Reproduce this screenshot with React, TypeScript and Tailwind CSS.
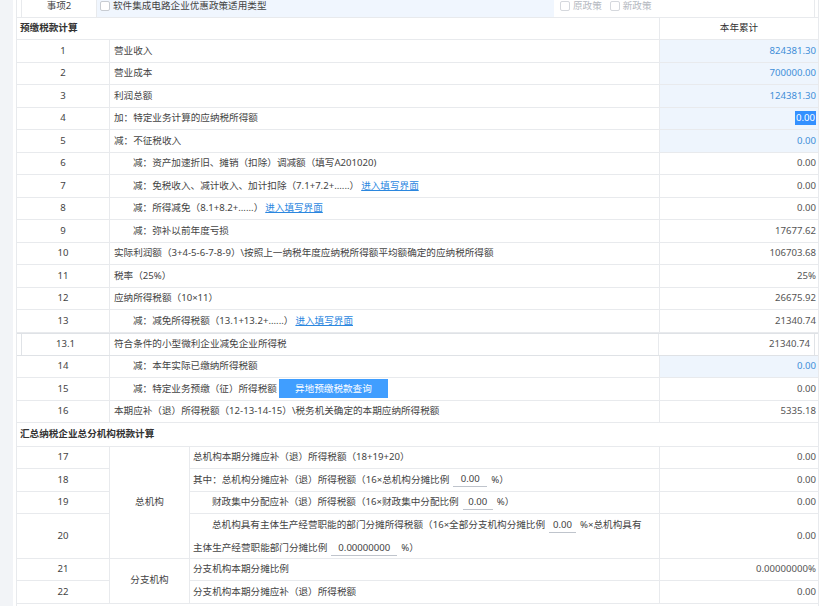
import React from 'react'

type Row = {
  no: string
  label: React.ReactNode
  value: string
  indent?: boolean
  blue?: boolean
  selected?: boolean
}

const Link = ({ children }: { children: React.ReactNode }) => (
  <span className="ml-[2px] cursor-pointer text-[#2b87df] underline">{children}</span>
)

const Underline = ({ value, w }: { value: string; w: string }) => (
  <span className={`mx-[4px] inline-block border-b border-[#bfc4cc] text-center leading-[14px] ${w}`}>{value}</span>
)

const rows: Row[] = [
  { no: '1', label: '营业收入', value: '824381.30', blue: true },
  { no: '2', label: '营业成本', value: '700000.00', blue: true },
  { no: '3', label: '利润总额', value: '124381.30', blue: true },
  { no: '4', label: '加：特定业务计算的应纳税所得额', value: '0.00', blue: true, selected: true },
  { no: '5', label: '减：不征税收入', value: '0.00', blue: true },
  { no: '6', label: '减：资产加速折旧、摊销（扣除）调减额（填写A201020)', value: '0.00', indent: true },
  {
    no: '7',
    label: (
      <>
        减：免税收入、减计收入、加计扣除（7.1+7.2+......）<Link>进入填写界面</Link>
      </>
    ),
    value: '0.00',
    indent: true,
  },
  {
    no: '8',
    label: (
      <>
        减：所得减免（8.1+8.2+......）<Link>进入填写界面</Link>
      </>
    ),
    value: '0.00',
    indent: true,
  },
  { no: '9', label: '减：弥补以前年度亏损', value: '17677.62', indent: true },
  {
    no: '10',
    label: '实际利润额（3+4-5-6-7-8-9）\\按照上一纳税年度应纳税所得额平均额确定的应纳税所得额',
    value: '106703.68',
  },
  { no: '11', label: '税率（25%）', value: '25%' },
  { no: '12', label: '应纳所得税额（10×11）', value: '26675.92' },
  {
    no: '13',
    label: (
      <>
        减：减免所得税额（13.1+13.2+......）<Link>进入填写界面</Link>
      </>
    ),
    value: '21340.74',
    indent: true,
  },
]

const rowsAfter: Row[] = [
  { no: '14', label: '减：本年实际已缴纳所得税额', value: '0.00', indent: true, blue: true },
  {
    no: '15',
    label: (
      <>
        减：特定业务预缴（征）所得税额
        <button className="ml-[2px] h-[19px] w-[109px] bg-[#409eff] text-[9.6px] text-white">异地预缴税款查询</button>
      </>
    ),
    value: '0.00',
    indent: true,
  },
  {
    no: '16',
    label: '本期应补（退）所得税额（12-13-14-15）\\税务机关确定的本期应纳所得税额',
    value: '5335.18',
  },
]

function TaxRow({ r }: { r: Row }) {
  return (
    <div className="flex h-[22.5px] border-b border-[#e8eaed]">
      <div className="flex w-[93px] shrink-0 items-center justify-center border-r border-[#e8eaed]">{r.no}</div>
      <div
        className={`flex min-w-0 flex-1 items-center overflow-hidden whitespace-nowrap border-r border-[#e8eaed] ${
          r.indent ? 'pl-[23px]' : 'pl-[4px]'
        }`}
      >
        {r.label}
      </div>
      <div
        className={`flex w-[158px] shrink-0 items-center justify-end pr-[2px] ${
          r.blue ? 'bg-[#eef5fd] text-[#3e8ed8]' : 'text-[#555]'
        }`}
      >
        {r.selected ? <span className="bg-[#3390ff] px-[1px] leading-[14px] text-white">{r.value}</span> : r.value}
      </div>
    </div>
  )
}

const Box = ({ disabled }: { disabled?: boolean }) => (
  <span
    className={`mr-[3px] inline-block h-[10px] w-[10px] rounded-[2px] border bg-white ${
      disabled ? 'border-[#d5d8dd]' : 'border-[#c8ccd2]'
    }`}
  />
)

export default function App() {
  const cell = 'border-r border-b border-[#e8eaed] flex items-center min-w-0 overflow-hidden'
  return (
    <div className="flex h-[606px] w-full overflow-hidden bg-white font-['Noto_Sans','Noto_Sans_CJK_SC',sans-serif] text-[9.6px] text-[#444]">
      <div className="w-[13px] shrink-0 bg-[#f2f4f7]" />
      <div className="min-w-0 flex-1 pl-[3px] pr-[9px]">
        <div className="mt-[-4.5px] border-x border-[#e8eaed]">
          {/* 事项2 */}
          <div className="flex h-[22px] border-b border-[#e8eaed]">
            <div className="ml-[4px] mr-[3px] flex min-w-0 flex-1 border-x border-[#e8eaed]">
              <div className="flex w-[75px] shrink-0 items-center justify-center border-r border-[#e8eaed]">事项2</div>
              <div className="flex min-w-0 flex-1 items-center bg-[#f0f6fe] pl-[3px]">
                <Box />
                软件集成电路企业优惠政策适用类型
              </div>
              <div className="flex w-[260px] shrink-0 items-center pl-[6px] text-[#b5b9bf]">
                <Box disabled />
                原政策
                <span className="ml-[8px]" />
                <Box disabled />
                新政策
              </div>
            </div>
          </div>

          {/* 预缴税款计算 */}
          <div className="flex h-[22.5px] border-b border-[#e8eaed]">
            <div className="flex min-w-0 flex-1 items-center border-r border-[#e8eaed] pl-[3px] font-bold text-[#333]">
              预缴税款计算
            </div>
            <div className="flex w-[158px] shrink-0 items-center justify-center text-[#333]">本年累计</div>
          </div>

          {rows.map((r) => (
            <TaxRow key={r.no} r={r} />
          ))}

          {/* 13.1 */}
          <div className="flex h-[23px] border-b border-t border-[#dfe2e6]">
            <div className="ml-[4px] mr-[3px] flex min-w-0 flex-1 border-x border-[#e0e3e7]">
              <div className="flex w-[88px] shrink-0 items-center justify-center border-r border-[#e8eaed]">13.1</div>
              <div className="flex min-w-0 flex-1 items-center border-r border-[#e8eaed] pl-[4px]">
                符合条件的小型微利企业减免企业所得税
              </div>
              <div className="flex w-[155px] shrink-0 items-center justify-end pr-[4px] text-[#555]">21340.74</div>
            </div>
          </div>

          {rowsAfter.map((r) => (
            <TaxRow key={r.no} r={r} />
          ))}

          {/* 汇总纳税企业总分机构税款计算 */}
          <div className="flex h-[23.5px] items-center border-b border-[#e8eaed] pl-[3px] font-bold text-[#333]">
            汇总纳税企业总分机构税款计算
          </div>

          <div className="grid grid-cols-[93px_80px_minmax(0,1fr)_158px] grid-rows-[22.5px_22.5px_22.5px_44.5px_22.5px_22.5px_22.5px]">
            <div className={`${cell} justify-center`}>17</div>
            <div className={`${cell} row-span-4 justify-center`}>总机构</div>
            <div className={`${cell} pl-[3px]`}>总机构本期分摊应补（退）所得税额（18+19+20）</div>
            <div className={`${cell} justify-end border-r-0 pr-[2px] text-[#555]`}>0.00</div>

            <div className={`${cell} justify-center`}>18</div>
            <div className={`${cell} whitespace-nowrap pl-[3px]`}>
              其中：总机构分摊应补（退）所得税额（16×总机构分摊比例
              <Underline value="0.00" w="w-[34px]" />
              %）
            </div>
            <div className={`${cell} justify-end border-r-0 pr-[2px] text-[#555]`}>0.00</div>

            <div className={`${cell} justify-center`}>19</div>
            <div className={`${cell} whitespace-nowrap pl-[22px]`}>
              财政集中分配应补（退）所得税额（16×财政集中分配比例
              <Underline value="0.00" w="w-[30px]" />
              %）
            </div>
            <div className={`${cell} justify-end border-r-0 pr-[2px] text-[#555]`}>0.00</div>

            <div className={`${cell} justify-center`}>20</div>
            <div className="flex min-w-0 flex-col justify-center overflow-hidden whitespace-nowrap border-b border-r border-[#e8eaed] pl-[3px] leading-[23px]">
              <div className="pl-[19px]">
                总机构具有主体生产经营职能的部门分摊所得税额（16×全部分支机构分摊比例
                <Underline value="0.00" w="w-[27px]" />
                %×总机构具有
              </div>
              <div>
                主体生产经营职能部门分摊比例
                <Underline value="0.00000000" w="w-[66px]" />
                %）
              </div>
            </div>
            <div className={`${cell} justify-end border-r-0 pr-[2px] text-[#555]`}>0.00</div>

            <div className={`${cell} justify-center`}>21</div>
            <div className={`${cell} row-span-2 justify-center`}>分支机构</div>
            <div className={`${cell} pl-[3px]`}>分支机构本期分摊比例</div>
            <div className={`${cell} justify-end border-r-0 pr-[2px] text-[#555]`}>0.00000000%</div>

            <div className={`${cell} justify-center`}>22</div>
            <div className={`${cell} pl-[3px]`}>分支机构本期分摊应补（退）所得税额</div>
            <div className={`${cell} justify-end border-r-0 pr-[2px] text-[#555]`}>0.00</div>

            <div className={`${cell} col-span-4 border-r-0`} />
          </div>
        </div>
      </div>
    </div>
  )
}
